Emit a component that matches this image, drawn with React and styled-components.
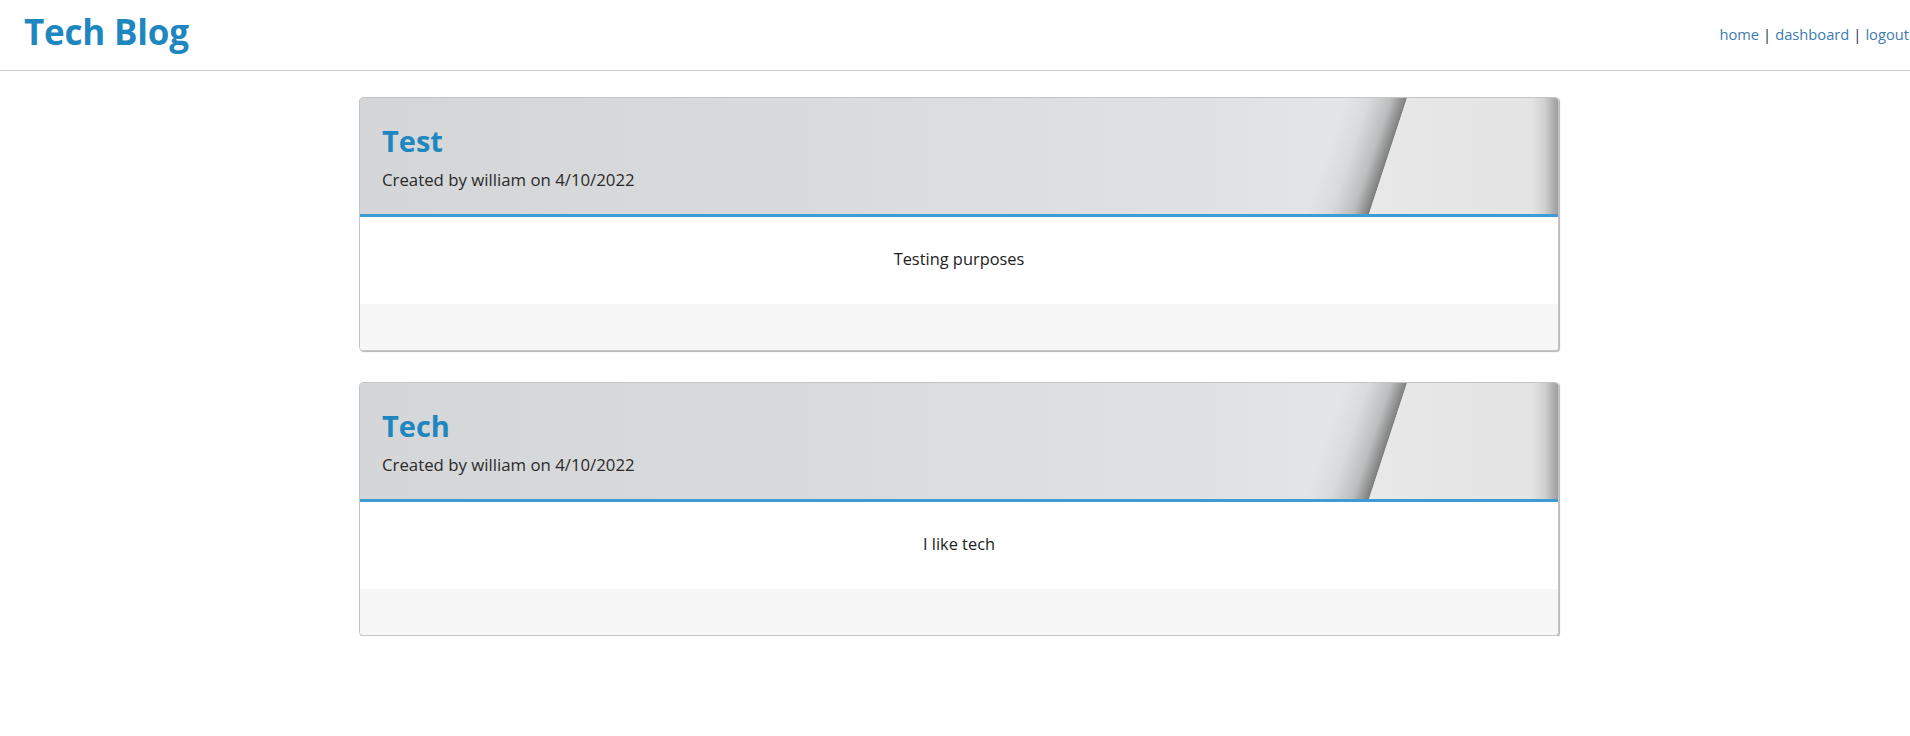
import React from "react";
import styled, { createGlobalStyle } from "styled-components";

const Global = createGlobalStyle`
  html, body { margin: 0; padding: 0; background: #fff; }
  body { font-family: "Open Sans", "Noto Sans", sans-serif; color: #222; }
  * { box-sizing: border-box; }
`;

const TopBar = styled.header`
  height: 71px;
  border-bottom: 1px solid #cfcfcf;
  display: flex;
  align-items: center;
  justify-content: space-between;
  padding: 0 1px 0 24px;
`;

const Brand = styled.h1`
  margin: 0;
  font-size: 35px;
  font-weight: 700;
  color: #1f87bf;
  letter-spacing: -0.2px;
  line-height: 1;
  padding-bottom: 8px;
`;

const Nav = styled.nav`
  font-size: 14.7px;
  color: #1b2a55;
  display: flex;
  gap: 4px;
  padding-bottom: 2px;
`;

const NavLink = styled.a`
  color: #3f7bb0;
  text-decoration: none;
`;

const Main = styled.main`
  padding: 26px 0 0 8px;
  display: flex;
  flex-direction: column;
  align-items: center;
  gap: 31px;
`;

const Card = styled.article`
  width: 1200px;
  border: 1px solid #c4c4c4;
  border-radius: 4px;
  box-shadow: 1px 1px 1px #b5b5b5;
  overflow: hidden;
  background: #fff;
`;

const CardHead = styled.div`
  position: relative;
  height: 119px;
  padding: 25px 22px 0;
  border-bottom: 3px solid #3e9bd4;
  background: linear-gradient(to right, #d5d6d8 0%, #d9dadc 35%, #e0e1e2 70%, #e6e7e8 88%);
`;

const Fold = styled.svg`
  position: absolute;
  top: 0;
  right: 0;
  width: 260px;
  height: 116px;
`;

const Title = styled.h2`
  position: relative;
  margin: 0;
  font-size: 29px;
  font-weight: 700;
  color: #1f87bf;
  line-height: 36px;
`;

const Meta = styled.p`
  position: relative;
  margin: 10px 0 0;
  font-size: 16.8px;
  line-height: 22px;
  color: #2a2a2a;
`;

const CardBody = styled.div`
  height: 87px;
  display: flex;
  align-items: center;
  justify-content: center;
  font-size: 16.4px;
  color: #222;
  padding-bottom: 4px;
`;

const CardFoot = styled.div`
  height: 46px;
  background: #f7f7f7;
`;

function FoldArt({ id }) {
  return (
    <Fold viewBox="0 0 260 116" preserveAspectRatio="none" aria-hidden="true">
      <defs>
        <linearGradient id={`bg${id}`} gradientUnits="userSpaceOnUse" x1="71" y1="0" x2="260" y2="0">
          <stop offset="0" stopColor="#e8e8e9" />
          <stop offset="0.86" stopColor="#e4e4e5" />
          <stop offset="0.93" stopColor="#d0d0d1" />
          <stop offset="1" stopColor="#9d9d9d" />
        </linearGradient>
        <linearGradient id={`sh${id}`} gradientUnits="userSpaceOnUse" x1="33" y1="39" x2="90" y2="58">
          <stop offset="0" stopColor="#000" stopOpacity="0" />
          <stop offset="0.4" stopColor="#000" stopOpacity="0.05" />
          <stop offset="0.75" stopColor="#000" stopOpacity="0.18" />
          <stop offset="1" stopColor="#000" stopOpacity="0.46" />
        </linearGradient>
      </defs>
      <polygon points="0,0 109,0 71,116 0,116" fill={`url(#sh${id})`} />
      <polygon points="109,0 260,0 260,116 71,116" fill={`url(#bg${id})`} />
    </Fold>
  );
}

const posts = [
  { title: "Test", author: "william", date: "4/10/2022", body: "Testing purposes" },
  { title: "Tech", author: "william", date: "4/10/2022", body: "I like tech" },
];

export default function App() {
  return (
    <>
      <Global />
      <TopBar>
        <Brand>Tech Blog</Brand>
        <Nav>
          <NavLink href="#">home</NavLink>|<NavLink href="#">dashboard</NavLink>|<NavLink href="#">logout</NavLink>
        </Nav>
      </TopBar>
      <Main>
        {posts.map((p, i) => (
          <Card key={i}>
            <CardHead>
              <FoldArt id={i} />
              <Title>{p.title}</Title>
              <Meta>Created by {p.author} on {p.date}</Meta>
            </CardHead>
            <CardBody>{p.body}</CardBody>
            <CardFoot />
          </Card>
        ))}
      </Main>
    </>
  );
}
